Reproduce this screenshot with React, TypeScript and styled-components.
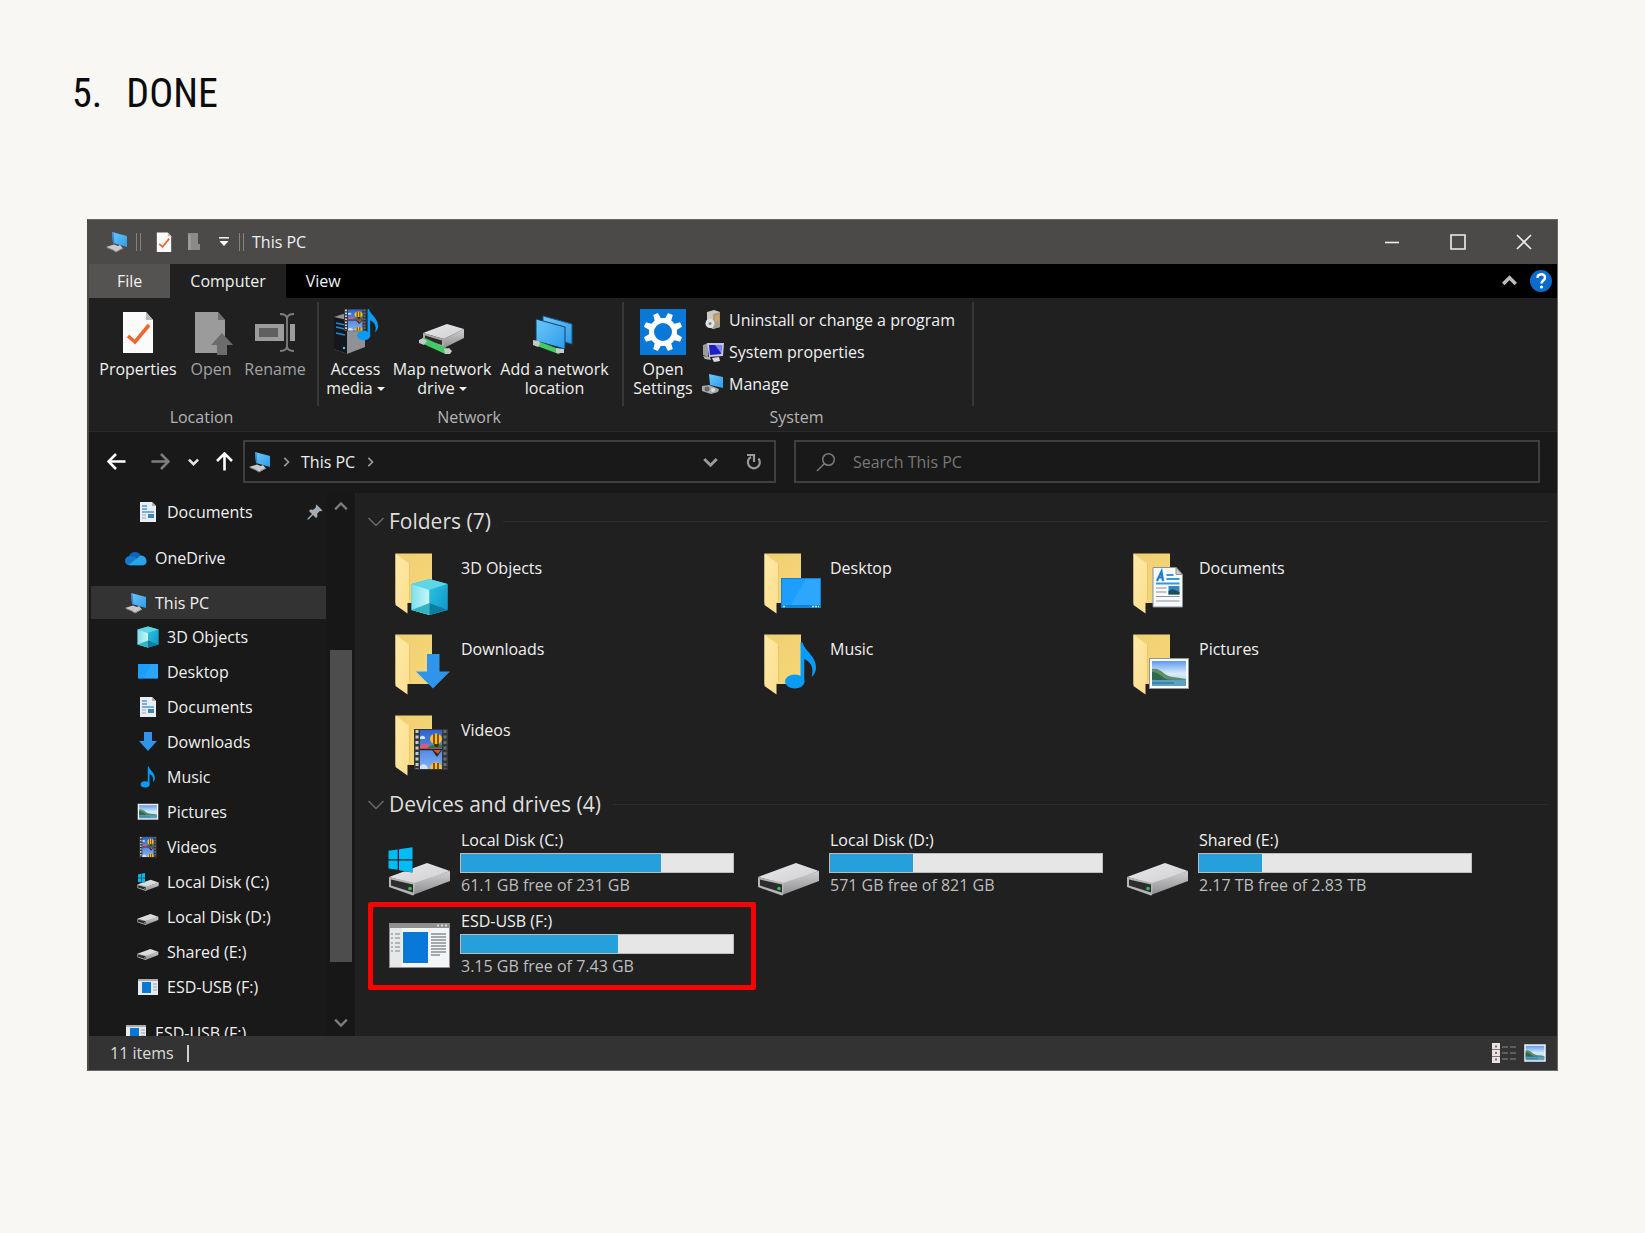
import React from "react";
import styled, { createGlobalStyle, css } from "styled-components";

const c = {
  page: "#f8f7f3",
  title: "#4b4a48",
  ribbon: "#202020",
  chrome: "#191919",
  line: "#3f3f3f",
  text: "#f0f0f0",
  muted: "#b4b4b4",
  fill: "#26a0da",
};

const GlobalStyle = createGlobalStyle`
  *, *::before, *::after { box-sizing: border-box; }
  body {
    margin: 0;
    background: ${c.page};
    font-family: "Open Sans", "Noto Sans", sans-serif;
    font-size: 16px;
    line-height: 22px;
  }
  svg { display: block; flex: none; }
  button { font: inherit; color: inherit; background: none; border: 0; padding: 0; margin: 0; cursor: pointer; }
  a { color: inherit; text-decoration: none; }
  ul { list-style: none; margin: 0; padding: 0; }
`;

/* ---------- page ---------- */

const Slide = styled.main`
  padding: 68px 87px 96px 72px;
`;

const Heading = styled.h1`
  display: flex;
  gap: 24px;
  margin: 0 0 99px;
  font-family: "Roboto Condensed", "Open Sans Condensed", "Noto Sans Condensed", Roboto, sans-serif;
  font-size: 40px;
  line-height: 52px;
  font-weight: 400;
  color: #0c0c0c;
`;

const Window = styled.section`
  margin-left: 15px;
  border: 1px solid #6a6967;
  border-left: 2px solid #4a4947;
  background: ${c.ribbon};
  color: ${c.text};
`;

/* ---------- title bar ---------- */

const TitleBar = styled.header`
  display: flex;
  align-items: center;
  height: 44px;
  padding-left: 17px;
  background: ${c.title};
`;

const QuickAccess = styled.div`
  display: flex;
  align-items: center;
  flex: 1;
`;

const QuickButton = styled.button`
  display: grid;
  place-items: center;
  width: 30px;
  height: 28px;
`;

const Grip = styled.span<{ $lead?: number }>`
  width: 5px;
  height: 18px;
  margin: 0 8px 0 ${(p) => p.$lead ?? 0}px;
  border: 1px solid #83827f;
  border-width: 0 1px;
`;

const WindowTitle = styled.h2`
  margin: 0;
  font-size: 16px;
  font-weight: 400;
`;

const CaptionButton = styled.button`
  display: grid;
  place-items: center;
  width: 66px;
  height: 44px;
`;

/* ---------- ribbon ---------- */

const TabBar = styled.div`
  display: flex;
  align-items: center;
  height: 34px;
  padding-right: 4px;
  background: #000;
`;

const Tab = styled.button<{ $kind?: "file" | "active" }>`
  height: 34px;
  padding: 0 20px;
  ${(p) => p.$kind === "file" && css`background: #545351; padding: 0 28px;`}
  ${(p) => p.$kind === "active" && css`background: ${c.ribbon};`}
`;

const TabTools = styled.div`
  display: flex;
  align-items: center;
  gap: 12px;
  margin-left: auto;
`;

const Ribbon = styled.div`
  display: flex;
  height: 134px;
  padding-top: 4px;
  border-bottom: 1px solid #282828;
`;

const Group = styled.section<{ $width: number }>`
  display: flex;
  flex-direction: column;
  width: ${(p) => p.$width}px;
`;

const GroupTools = styled.div`
  display: flex;
  height: 104px;
  padding: 7px 0 0 3px;
  border-right: 2px solid #383838;
`;

const GroupName = styled.h3`
  margin: 0;
  padding-right: 5px;
  font-size: 16px;
  font-weight: 400;
  text-align: center;
  color: ${c.muted};
`;

const RibbonButton = styled.button<{ $width: number }>`
  display: flex;
  flex-direction: column;
  align-items: center;
  width: ${(p) => p.$width}px;
  line-height: 19px;
  white-space: nowrap;
  &:disabled { color: #a3a3a3; }
  svg { margin-bottom: 5px; }
`;

const RibbonLabel = styled.span`
  display: block;
  white-space: pre-line;
`;

const Caret = styled.span`
  display: inline-block;
  margin-left: 4px;
  vertical-align: 3px;
  border: 4px solid transparent;
  border-top-color: currentColor;
  border-bottom-width: 0;
`;

const CommandList = styled.div`
  display: flex;
  flex-direction: column;
  gap: 10px;
  padding-left: 3px;
`;

const Command = styled.button`
  display: flex;
  align-items: center;
  gap: 5px;
  white-space: nowrap;
`;

/* ---------- navigation row ---------- */

const NavBar = styled.nav`
  display: flex;
  align-items: center;
  height: 61px;
  padding: 0 17px 2px 18px;
  background: ${c.chrome};
`;

const History = styled.div`
  display: flex;
  align-items: center;
  width: 136px;
`;

const HistoryButton = styled.button<{ $gap: number }>`
  margin-right: ${(p) => p.$gap}px;
`;

const Fields = styled.div`
  display: grid;
  grid-template-columns: 5fr 7fr;
  gap: 18px;
  flex: 1;
`;

const Field = styled.div`
  display: flex;
  align-items: center;
  height: 43px;
  border: 2px solid ${c.line};
`;

const Address = styled(Field)`
  padding: 0 11px 0 4px;
`;

const Crumbs = styled.div`
  display: flex;
  align-items: center;
  flex: 1;
  gap: 10px;
`;

const AddressTools = styled.div`
  display: flex;
  align-items: center;
  gap: 27px;
`;

const Search = styled(Field)`
  padding: 0 20px;
  gap: 17px;
`;

const SearchInput = styled.input`
  flex: 1;
  min-width: 0;
  padding: 0;
  border: 0;
  outline: 0;
  background: none;
  font: inherit;
  color: ${c.text};
  &::placeholder { color: #777; opacity: 1; }
`;

/* ---------- body ---------- */

const Body = styled.div`
  display: grid;
  grid-template-columns: 266px minmax(0, 1fr);
`;

const Sidebar = styled.aside`
  display: grid;
  grid-template-columns: minmax(0, 1fr) 29px;
  contain: size;
  overflow: hidden;
  background: ${c.chrome};
`;

const Tree = styled.div`
  display: flex;
  flex-direction: column;
  gap: 12px;
  min-height: 0;
  padding: 1px 0 0 2px;
  overflow: hidden;
  & > * { flex-shrink: 0; }
`;

const Node = styled.a<{ $child?: boolean; $selected?: boolean }>`
  display: flex;
  align-items: center;
  gap: 8px;
  height: ${(p) => (p.$child ? 35 : 33)}px;
  padding: 0 3px 0 ${(p) => (p.$child ? 46 : 34)}px;
  background: ${(p) => (p.$selected ? "#333" : "none")};
  white-space: nowrap;
`;

const NodeName = styled.span`
  flex: 1;
`;

const Scroll = styled.div`
  display: grid;
  grid-template-rows: 28px 129fr 312fr 46fr 28px;
  justify-items: center;
  background: #171717;
`;

const ScrollButton = styled.button`
  display: grid;
  place-items: center;
  width: 22px;
  &:last-child { grid-row: 5; }
`;

const Thumb = styled.div`
  grid-row: 3;
  width: 22px;
  background: #4d4d4d;
`;

const Content = styled.div`
  padding: 10px 9px 48px 11px;
  border-left: 1px solid #242424;
`;

const SectionHead = styled.h3`
  display: flex;
  align-items: center;
  gap: 4px;
  height: 36px;
  margin: 0 0 4px;
  font-size: 21px;
  line-height: 28px;
  font-weight: 400;
  color: #dedede;
  &::after {
    content: "";
    flex: 1;
    height: 1px;
    margin-left: 8px;
    background: #2c2c2c;
  }
`;

const Tiles = styled.div`
  display: grid;
  grid-template-columns: repeat(auto-fill, 369px);
  padding-left: 13px;
`;

const Tile = styled.a<{ $marked?: boolean }>`
  position: relative;
  display: flex;
  gap: 8px;
  height: 81px;
  padding: 8px 15px 0 8px;
  ${(p) =>
    p.$marked &&
    css`
      &::after {
        content: "";
        position: absolute;
        inset: -5px -7px -2px -12px;
        border: 5px solid #f60404;
        border-radius: 2px;
      }
    `}
`;

const FolderName = styled.span`
  padding: 6px 0 0 1px;
`;

const DriveInfo = styled.span`
  display: flex;
  flex-direction: column;
  flex: 1;
  margin-top: -5px;
`;

const DriveText = styled.span<{ $dim?: boolean }>`
  padding-left: 1px;
  color: ${(p) => (p.$dim ? "#bdbdbd" : c.text)};
`;

const Usage = styled.progress`
  appearance: none;
  display: block;
  width: 100%;
  height: 20px;
  margin: 2px 0 1px;
  border: 1px solid #bcbcbc;
  background: #e6e6e6;
  &::-webkit-progress-bar { background: #e6e6e6; }
  &::-webkit-progress-value { background: ${c.fill}; }
`;

/* ---------- status bar ---------- */

const StatusBar = styled.footer`
  display: flex;
  align-items: center;
  height: 34px;
  padding: 0 11px 0 21px;
  background: #333;
  color: #dcdcdc;
`;

const Divider = styled.span`
  width: 2px;
  height: 17px;
  margin-left: 13px;
  background: #cfcfcf;
`;

const Views = styled.div`
  display: flex;
  align-items: center;
  gap: 8px;
  margin-left: auto;
`;

/* ---------- drawings ---------- */

const HiddenSvg = styled.svg`
  position: absolute;
`;

const Defs = () => (
  <HiddenSvg width="0" height="0" aria-hidden="true">
    <defs>
      <linearGradient id="back" x1="0" y1="0" x2="1" y2="1">
        <stop offset="0" stopColor="#f0cf72" /><stop offset="1" stopColor="#f6d878" />
      </linearGradient>
      <linearGradient id="flap" x1="0" y1="0" x2="1" y2="1">
        <stop offset="0" stopColor="#ffe9a8" /><stop offset="1" stopColor="#fbdf8e" />
      </linearGradient>
      <linearGradient id="screen" x1="0" y1="0" x2="1" y2="1">
        <stop offset="0" stopColor="#6cc7fb" /><stop offset="1" stopColor="#2d9ceb" />
      </linearGradient>
      <linearGradient id="lid" x1="0" y1="0" x2="1" y2="1">
        <stop offset="0" stopColor="#e9e9ea" /><stop offset="1" stopColor="#cfcfd2" />
      </linearGradient>
      <linearGradient id="side" x1="0" y1="0" x2="0" y2="1">
        <stop offset="0" stopColor="#d0d0d2" /><stop offset="1" stopColor="#8d8d90" />
      </linearGradient>
      <linearGradient id="sky" x1="0" y1="0" x2="0" y2="1">
        <stop offset="0" stopColor="#5f9bee" /><stop offset="0.5" stopColor="#d8ebfb" /><stop offset="1" stopColor="#a9d3ea" />
      </linearGradient>
      <linearGradient id="film" x1="0" y1="0" x2="0" y2="1">
        <stop offset="0" stopColor="#2d63cf" /><stop offset="1" stopColor="#7fb0f3" />
      </linearGradient>
      <linearGradient id="cubeL" x1="0" y1="0" x2="1" y2="0">
        <stop offset="0" stopColor="#7de0ea" /><stop offset="1" stopColor="#c9f6f8" />
      </linearGradient>
      <linearGradient id="cubeR" x1="0" y1="0" x2="1" y2="1">
        <stop offset="0" stopColor="#2cc3e2" /><stop offset="1" stopColor="#0c93c6" />
      </linearGradient>
    </defs>
  </HiddenSvg>
);

const PcIcon = () => (
  <svg width="22" height="22" viewBox="0 0 22 22" aria-hidden="true">
    <path d="M6 1l15 4v11L7 12z" fill="url(#screen)" />
    <path d="M6 1l1 11 1.500.4L7.500 1.400z" fill="#3a86c4" />
    <path d="M0 16l8-2.500 4 1.500 2-1 3 3.500-7 3.500-3-2z" fill="#c9c9c9" />
    <path d="M1 16.500l6 2.500 3 2 6-3.500" fill="none" stroke="#8b8b8b" strokeWidth="1" />
  </svg>
);

const CubeArt = () => (
  <>
    <path d="M0 5L18 0l18 5v26l-18 5-18-5z" fill="#1fb4da" />
    <path d="M0 5L18 0l18 5-18 6z" fill="#5fd6e6" />
    <path d="M0 5l18 6v25L0 31z" fill="url(#cubeL)" />
    <path d="M18 11l18-6v26l-18 5z" fill="url(#cubeR)" />
    <path d="M0 31l18-7v12z" fill="#35b3c4" />
    <path d="M18 24l18 7-18 5z" fill="#0b7fa0" />
  </>
);

const NoteArt = () => (
  <>
    <path d="M15.500 0h2.200c1.300 8 13.300 13 13.300 25 0 4-1.500 7-4.500 9.500C30 24 24 18.500 19.300 16.500V38h-3.800z" fill="#0a9bf5" />
    <ellipse cx="9.800" cy="39" rx="9.800" ry="7" fill="#0a9bf5" />
  </>
);

const PhotoArt = () => (
  <>
    <rect width="40" height="31" fill="#8e979d" />
    <rect x="1" y="1" width="38" height="29" fill="#fafafa" />
    <rect x="3" y="3" width="34" height="25" fill="url(#sky)" />
    <path d="M3 11c5-1 8 1 13 5s13 3 21 5v2H3z" fill="#5e8f63" />
    <path d="M3 14c5 0 8 3 12 6s14 1 22 3v1H3z" fill="#2f6a4f" />
    <path d="M3 22h34v6H3z" fill="#5d9fc2" />
    <path d="M3 24h22v2H3z" fill="#2f6f9a" opacity="0.6" />
  </>
);

const FilmArt = () => (
  <>
    <rect width="34" height="41" fill="#33363a" />
    <path d="M3 1v39" stroke="#c6cbd0" strokeWidth="3" strokeDasharray="3 2.500" />
    <path d="M31 1v39" stroke="#6a6e73" strokeWidth="3" strokeDasharray="3 2.500" />
    <rect x="6" y="1" width="22" height="39" fill="url(#film)" />
    <path d="M6 17c3-3 8-2 11 0h11v3H6z" fill="#e05a6a" />
    <path d="M14 18c5-3 9-3 14-2v3H14z" fill="#317a35" />
    <path d="M6 8c3-3 6 0 5 2H6zM6 37c3-3 7-2 8 3H6z" fill="#cfe2fa" />
    <path d="M6 20.500h22" stroke="#1d2733" strokeWidth="1.500" />
    <ellipse cx="22" cy="10" rx="6" ry="5.500" fill="#f6c522" />
    <path d="M20 5v10M24 5v10" stroke="#7d2b12" strokeWidth="1.600" />
    <path d="M20 15h5l-1 3h-3z" fill="#4a2913" />
    <path d="M18 21h10l-5 7z" fill="#2b2224" />
    <path d="M19 21h8l-3 4z" fill="#c9572d" />
    <path d="M16 40c0-9 12-9 12 0z" fill="#f6c522" />
    <path d="M20 34v6M24 34v6" stroke="#7d2b12" strokeWidth="1.600" />
  </>
);

const PageArt = () => (
  <>
    <path d="M.5.5h23l6.500 7v32.500H.5z" fill="#f7f9fb" stroke="#8a9197" />
    <path d="M23.500.5v7H30z" fill="#c7cdd2" stroke="#8a9197" />
    <path d="M4.500 14L9 4.500l1.500 9.500M6 10.500h4.500" fill="none" stroke="#1b7fd0" strokeWidth="2.200" />
    <path d="M14 8h7M14 12h13M3.500 16.500H27" stroke="#2f9ae0" strokeWidth="1.800" />
    <path d="M3.500 21H14M3.500 25H14M3.500 29.500H27M3.500 34H27" stroke="#8d9499" strokeWidth="1.200" />
    <rect x="16" y="19" width="11" height="8.500" fill="#3b84bf" />
    <path d="M16 24l4-2 7 3v2.500H16z" fill="#1f4d55" />
  </>
);

const overlays: Record<string, React.ReactNode> = {
  cube: <g transform="translate(23.500 28)"><CubeArt /></g>,
  desktop: (
    <g transform="translate(24 27)">
      <rect width="40" height="30" fill="#0f83dc" />
      <rect x="1" y="1" width="38" height="26" fill="#1c9ffc" />
      <path d="M25 1h14v26H10z" fill="#3dafff" opacity="0.5" />
      <path d="M2 28.500h2M31 28.500h7" stroke="#bfe3fb" strokeWidth="1.500" strokeDasharray="2 1" />
    </g>
  ),
  page: <g transform="translate(26.500 16)"><PageArt /></g>,
  down: <path d="M39 22h12.500v17.500H62l-17 17-17-17h11z" fill="#2f94ea" />,
  note: <g transform="translate(28 10.500)"><NoteArt /></g>,
  photo: <g transform="translate(23 26)"><PhotoArt /></g>,
  film: <g transform="translate(26 16)"><FilmArt /></g>,
};

const FolderIcon = ({ kind }: { kind: string }) => (
  <svg width="64" height="64" viewBox="0 0 64 64" aria-hidden="true">
    <path d="M7.500 2.500H44V52H7.500z" fill="url(#back)" />
    <path d="M7.500 2.500l14 10.500v36l-2 2v11.500l-12-8.500z" fill="url(#flap)" />
    <path d="M21.500 13v36" stroke="#e3bd5c" strokeWidth="0.700" />
    {overlays[kind]}
  </svg>
);

const DriveArt = () => (
  <>
    <path d="M39 29l23 8-35 13L1 43z" fill="url(#lid)" />
    <path d="M62 37v10L25 61l1-12z" fill="url(#side)" />
    <path d="M1 43l26 6-1 12-1 .5L1 53z" fill="#b5b5b8" />
    <path d="M3 45.500l22 5v8L3 51.500z" fill="#2c2d2f" />
    <circle cx="22" cy="54.500" r="1.800" fill="#35c04a" />
  </>
);

const DriveIcon = ({ system }: { system?: boolean }) => (
  <svg width="64" height="64" viewBox="0 0 64 64" aria-hidden="true">
    <DriveArt />
    {system && (
      <>
        <path d="M.5 14.500L24.500 12v26.500L.5 35z" fill="#202020" />
        <path d="M.5 16.800l9.200-1.300v9.700H.5zM11 15.300l13.500-2v11.900H11zM.5 26.500h9.200v9.300l-9.200-1.300zM11 26.500h13.500v12L11 36.200z" fill="#04bcf4" />
      </>
    )}
  </svg>
);

const InstallerIcon = () => (
  <svg width="64" height="64" viewBox="0 0 64 64" aria-hidden="true">
    <rect x="1" y="8" width="61" height="45" fill="#8f8f8f" />
    <path d="M2 13h59v39H2z" fill="#f4f5f6" />
    <path d="M2 13h12v39H2z" fill="#e6e8e9" />
    <path d="M49 10.500h2M53 10.500h2M57 10.500h2" stroke="#d8d8d8" strokeWidth="2" />
    <path d="M3 19h2m2 0h5M3 23h2m2 0h5M3 28h2m2 0h5M3 32h2m2 0h5M3 36h2m2 0h5" stroke="#7f8386" strokeWidth="1.200" />
    <rect x="15" y="17" width="25" height="31" fill="#0a78d7" />
    <path d="M43 19h15M43 22h15M43 25h15M43 28h15M43 31h15M43 34h15M43 37h15M43 40h9" stroke="#8b8f92" strokeWidth="1.300" />
  </svg>
);

const SmallIcon = ({ kind }: { kind: string }) => {
  switch (kind) {
    case "pc":
      return <PcIcon />;
    case "cloud":
      return (
        <svg width="22" height="22" viewBox="0 0 24 22" aria-hidden="true">
          <path d="M4 10C5 4 14 2 17 8l-8 5z" fill="#0a64b8" />
          <path d="M5 19a5 5 0 0 1 0-10c3-.6 5 .5 7 2l8 8z" fill="#1379d0" />
          <path d="M4 18.500L16 8.500c4-1 7 1.500 7.500 5.500.3 3-2 5-4 5H6z" fill="#28a5ea" />
        </svg>
      );
    case "cube":
      return <svg width="22" height="22" viewBox="-1 -1 38 38" aria-hidden="true"><CubeArt /></svg>;
    case "desktop":
      return (
        <svg width="22" height="22" viewBox="0 0 22 22" aria-hidden="true">
          <rect x="1" y="3" width="20" height="15" fill="#1c9ffc" />
          <path d="M14 3h7v15H7z" fill="#46b2ff" opacity="0.4" />
          <path d="M1 17.500h20" stroke="#0b73c9" />
        </svg>
      );
    case "page":
      return (
        <svg width="22" height="22" viewBox="0 0 22 22" aria-hidden="true">
          <path d="M3 1h12l4 4v16H3z" fill="#e9eef2" />
          <path d="M15 1v4h4z" fill="#aab3ba" />
          <path d="M5 5h5M5 8h5M5 11h12" stroke="#4b9ad6" strokeWidth="1.500" />
          <path d="M11 13h6v4h-6z" fill="#3f86bb" />
          <path d="M5 14h4M5 17h4" stroke="#9aa4ab" />
        </svg>
      );
    case "down":
      return <svg width="22" height="22" viewBox="0 0 22 22" aria-hidden="true"><path d="M7 1h8v9h5l-9 10-9-10h5z" fill="#2f94ea" /></svg>;
    case "note":
      return <svg width="22" height="22" viewBox="-8 -1 48 48" aria-hidden="true"><NoteArt /></svg>;
    case "photo":
      return <svg width="22" height="22" viewBox="-1 -5 42 42" aria-hidden="true"><PhotoArt /></svg>;
    case "film":
      return <svg width="22" height="22" viewBox="-4 -1 42 43" aria-hidden="true"><FilmArt /></svg>;
    case "system":
      return (
        <svg width="22" height="22" viewBox="0 0 22 22" aria-hidden="true">
          <g transform="translate(0 -1.500) scale(.35)"><DriveArt /></g>
          <path d="M1 3.500L8 2v10l-7-1z" fill="#12b5e8" />
          <path d="M4.500 2.500v9M1 7h7" stroke="#0b5871" strokeWidth="0.800" />
        </svg>
      );
    case "drive":
      return <svg width="22" height="22" viewBox="0 6 64 64" aria-hidden="true"><DriveArt /></svg>;
    default:
      return (
        <svg width="22" height="22" viewBox="0 0 22 22" aria-hidden="true">
          <path d="M1 3h20v16H1z" fill="#e8ebee" />
          <path d="M1 3h20v2H1z" fill="#a9adb0" />
          <rect x="5" y="6" width="9" height="11" fill="#0a78d7" />
          <path d="M16 8h4M16 11h4M16 14h4" stroke="#9a9ea1" />
        </svg>
      );
  }
};

const PropertiesIcon = ({ size = 46 }: { size?: number }) => (
  <svg width={size} height={size} viewBox="0 0 46 46" aria-hidden="true">
    <path d="M8 3h23l7 8v33H8z" fill="#fbfbfb" />
    <path d="M31 3v8h7z" fill="#b9b9b9" />
    <path d="M13 27l7 6 14-17" fill="none" stroke="#f0652b" strokeWidth="3.600" />
  </svg>
);

const OpenIcon = () => (
  <svg width="46" height="46" viewBox="0 0 46 46" aria-hidden="true">
    <path d="M7 3h23l7 8v33H7z" fill="#9b9b9b" />
    <path d="M30 3v8h7z" fill="#6e6e6e" />
    <path d="M34 24l11 12h-6v10H29V36h-6z" fill="#6c6c6c" />
  </svg>
);

const RenameIcon = () => (
  <svg width="46" height="46" viewBox="0 0 46 46" aria-hidden="true">
    <path d="M3 15h40v17H3z" fill="#9c9c9c" />
    <path d="M7 19h19v9H7z" fill="#606060" />
    <path d="M32 15h6v17h-6z" fill="#202020" />
    <path d="M28 5c5 0 7 2 7 5v27c0 3-2 5-7 5M42 5c-5 0-7 2-7 5v27c0 3 2 5 7 5" fill="none" stroke="#7d7d7d" strokeWidth="1.800" />
  </svg>
);

const MediaIcon = () => (
  <svg width="46" height="46" viewBox="0 0 46 46" aria-hidden="true">
    <path d="M1 8l9-3 22 4v29l-18 7L1 40z" fill="#8f9194" />
    <path d="M1 8l13 3v34L1 40z" fill="#14181d" />
    <path d="M3 14l9 2M3 18l9 2M3 24l9 2" stroke="#1d8bd0" strokeWidth="1.400" />
    <circle cx="11" cy="39" r="1.200" fill="#36d0d8" />
    <g transform="translate(11 0) scale(.66 .54)"><FilmArt /></g>
    <g transform="translate(24 0) scale(.68)"><NoteArt /></g>
  </svg>
);

const MapDriveIcon = () => (
  <svg width="46" height="46" viewBox="0 0 46 46" aria-hidden="true">
    <path d="M4 24l24-9 17 5-20 10z" fill="url(#lid)" />
    <path d="M45 20v9l-20 10v-9z" fill="url(#side)" />
    <path d="M4 24l21 6v9L4 33z" fill="#aaaaad" />
    <path d="M6 26.500l17 5v4.500L6 31z" fill="#2b2c2e" />
    <path d="M3 31l24 11" stroke="#47c865" strokeWidth="6" />
    <path d="M0 31l4-2 4 3-3 4-5-2zM25 40l5-1 3 3-2 3-5 0z" fill="#c3c9c4" />
  </svg>
);

const AddLocationIcon = () => (
  <svg width="46" height="46" viewBox="0 0 46 46" aria-hidden="true">
    <path d="M11 7l29 8v20l-29-8z" fill="url(#screen)" stroke="#155b86" />
    <path d="M4 10l29 8v22L4 32z" fill="url(#screen)" stroke="#123f5d" />
    <path d="M4 34l24 9" stroke="#47c865" strokeWidth="5" />
    <path d="M1 31l6 1 1 3-2 3-5-2zM24 39l8 1v4l-8 0z" fill="#c3c9c4" />
  </svg>
);

const SettingsIcon = () => (
  <svg width="46" height="46" viewBox="0 0 46 46" aria-hidden="true">
    <rect width="46" height="46" fill="#0a78d7" />
    <g fill="#fff">
      {[22.5, 67.5, 112.5, 157.5, 202.5, 247.5, 292.5, 337.5].map((a) => (
        <path key={a} d="M19.500 11L20.500 3.500h5L26.500 11z" transform={`rotate(${a} 23 23)`} />
      ))}
    </g>
    <circle cx="23" cy="23" r="11.500" fill="none" stroke="#fff" strokeWidth="5" />
  </svg>
);

const UninstallIcon = () => (
  <svg width="22" height="22" viewBox="0 0 22 22" aria-hidden="true">
    <path d="M5 3l7-2 6 2v15l-7 2-6-3z" fill="#cfcac0" />
    <path d="M11 5l7-2v15l-7 2z" fill="#a59c8c" />
    <path d="M13 7l4-1v6l-4 1z" fill="#d9a457" />
    <circle cx="8" cy="14.500" r="4.500" fill="#dfe3e6" />
    <circle cx="8" cy="14.500" r="1.500" fill="#7c8186" />
  </svg>
);

const SystemIcon = () => (
  <svg width="22" height="22" viewBox="0 0 22 22" aria-hidden="true">
    <path d="M1 4l5-2v14l-5-2z" fill="#9a9aa0" />
    <path d="M5 2h17l-1 13-14 1z" fill="#c5c5d6" />
    <path d="M7 4h13l-1 9-11 1z" fill="#1c1fc4" />
    <path d="M13 4h7l-1 8z" fill="#7f84ee" />
    <path d="M10 17l7-1 1 4-6 1z" fill="#dcdcdc" />
    <path d="M1 15l7 1 1 3-6-1z" fill="#b3b3b3" />
  </svg>
);

const ManageIcon = () => (
  <svg width="22" height="22" viewBox="0 0 22 22" aria-hidden="true">
    <path d="M7 1l14 3v11L8 12z" fill="url(#screen)" />
    <path d="M0 13l7-1 10 4-1 3-7 2-9-3z" fill="#a9a9ab" />
    <circle cx="5" cy="16" r="2.500" fill="#66686b" />
    <circle cx="11" cy="17" r="2" fill="#dedede" />
  </svg>
);

const Chevron = ({ dir, size = 10, width = 2, color = "#9a9a9a" }: { dir: "up" | "down" | "right"; size?: number; width?: number; color?: string }) => {
  const d = { up: "M1 8l5-5 5 5", down: "M1 4l5 5 5-5", right: "M4 1l5 5-5 5" }[dir];
  return (
    <svg width={size} height={size} viewBox="0 0 12 12" aria-hidden="true">
      <path d={d} fill="none" stroke={color} strokeWidth={width} />
    </svg>
  );
};

const Arrow = ({ turn = 0, color = "#fff" }: { turn?: number; color?: string }) => (
  <svg width="19" height="19" viewBox="0 0 19 19" aria-hidden="true">
    <path d="M18.500 9.500H2M9 2L1.500 9.500 9 17" fill="none" stroke={color} strokeWidth="2.600" transform={`rotate(${turn} 9.500 9.500)`} />
  </svg>
);

/* ---------- data ---------- */

const folders = [
  ["3D Objects", "cube"],
  ["Desktop", "desktop"],
  ["Documents", "page"],
  ["Downloads", "down"],
  ["Music", "note"],
  ["Pictures", "photo"],
  ["Videos", "film"],
];

const drives = [
  { name: "Local Disk (C:)", small: "system", free: "61.1 GB free of 231 GB", used: 73.5 },
  { name: "Local Disk (D:)", small: "drive", free: "571 GB free of 821 GB", used: 30.4 },
  { name: "Shared (E:)", small: "drive", free: "2.17 TB free of 2.83 TB", used: 23.3 },
  { name: "ESD-USB (F:)", small: "installer", free: "3.15 GB free of 7.43 GB", used: 57.6 },
];

/* ---------- sections ---------- */

const Title = () => (
  <TitleBar>
    <QuickAccess>
      <PcIcon />
      <Grip $lead={8} />
      <QuickButton aria-label="Properties"><PropertiesIcon size={22} /></QuickButton>
      <QuickButton aria-label="New folder">
        <svg width="14" height="18" viewBox="0 0 14 18" aria-hidden="true">
          <path d="M1 0h10v11h2v6H1z" fill="#8b8a88" />
          <path d="M1 0l3 3v14H1z" fill="#9c9b99" />
        </svg>
      </QuickButton>
      <QuickButton aria-label="Customize Quick Access Toolbar">
        <svg width="12" height="10" viewBox="0 0 12 10" aria-hidden="true">
          <path d="M1 .8h10" stroke="#fff" strokeWidth="1.400" />
          <path d="M1.500 4h9L6 9z" fill="#fff" />
        </svg>
      </QuickButton>
      <Grip />
      <WindowTitle>This PC</WindowTitle>
    </QuickAccess>
    <CaptionButton aria-label="Minimize">
      <svg width="16" height="16" viewBox="0 0 16 16"><path d="M1 8.500h14" stroke="#eee" strokeWidth="1.600" /></svg>
    </CaptionButton>
    <CaptionButton aria-label="Maximize">
      <svg width="16" height="16" viewBox="0 0 16 16"><path d="M1 1h14v14H1z" fill="none" stroke="#eee" strokeWidth="1.600" /></svg>
    </CaptionButton>
    <CaptionButton aria-label="Close">
      <svg width="16" height="16" viewBox="0 0 16 16"><path d="M1 1l14 14M15 1L1 15" stroke="#eee" strokeWidth="1.600" /></svg>
    </CaptionButton>
  </TitleBar>
);

const RibbonTabs = () => (
  <TabBar>
    <Tab $kind="file">File</Tab>
    <Tab $kind="active">Computer</Tab>
    <Tab>View</Tab>
    <TabTools>
      <button aria-label="Collapse the ribbon"><Chevron dir="up" size={15} width={2.8} color="#bdbdbd" /></button>
      <button aria-label="Help">
        <svg width="24" height="24" viewBox="0 0 24 24">
          <circle cx="12" cy="12" r="11" fill="#0b6cce" />
          <path d="M8.500 9c0-5 7.500-5 7.500-.5 0 3-3.500 3-3.500 6" fill="none" stroke="#fff" strokeWidth="2.400" />
          <circle cx="12.500" cy="18" r="1.600" fill="#fff" />
        </svg>
      </button>
    </TabTools>
  </TabBar>
);

const RibbonGroups = () => (
  <Ribbon>
    <Group $width={230}>
      <GroupTools>
        <RibbonButton $width={92}><PropertiesIcon /><RibbonLabel>Properties</RibbonLabel></RibbonButton>
        <RibbonButton $width={54} disabled><OpenIcon /><RibbonLabel>Open</RibbonLabel></RibbonButton>
        <RibbonButton $width={74} disabled><RenameIcon /><RibbonLabel>Rename</RibbonLabel></RibbonButton>
      </GroupTools>
      <GroupName>Location</GroupName>
    </Group>
    <Group $width={305}>
      <GroupTools>
        <RibbonButton $width={67}><MediaIcon /><RibbonLabel>{"Access\nmedia"}<Caret /></RibbonLabel></RibbonButton>
        <RibbonButton $width={106}><MapDriveIcon /><RibbonLabel>{"Map network\ndrive"}<Caret /></RibbonLabel></RibbonButton>
        <RibbonButton $width={119}><AddLocationIcon /><RibbonLabel>{"Add a network\nlocation"}</RibbonLabel></RibbonButton>
      </GroupTools>
      <GroupName>Network</GroupName>
    </Group>
    <Group $width={350}>
      <GroupTools>
        <RibbonButton $width={72}><SettingsIcon /><RibbonLabel>{"Open\nSettings"}</RibbonLabel></RibbonButton>
        <CommandList>
          <Command><UninstallIcon />Uninstall or change a program</Command>
          <Command><SystemIcon />System properties</Command>
          <Command><ManageIcon />Manage</Command>
        </CommandList>
      </GroupTools>
      <GroupName>System</GroupName>
    </Group>
  </Ribbon>
);

const Navigation = () => (
  <NavBar aria-label="Location">
    <History>
      <HistoryButton $gap={25} aria-label="Back"><Arrow /></HistoryButton>
      <HistoryButton $gap={18} aria-label="Forward"><Arrow turn={180} color="#7d7d7d" /></HistoryButton>
      <HistoryButton $gap={16} aria-label="Recent locations"><Chevron dir="down" size={11} width={2.8} color="#e6e6e6" /></HistoryButton>
      <HistoryButton $gap={0} aria-label="Up"><Arrow turn={90} /></HistoryButton>
    </History>
    <Fields>
      <Address>
        <Crumbs>
          <PcIcon />
          <Chevron dir="right" />
          <button>This PC</button>
          <Chevron dir="right" />
        </Crumbs>
        <AddressTools>
          <button aria-label="Previous locations"><Chevron dir="down" size={15} width={2.4} /></button>
          <button aria-label="Refresh">
            <svg width="18" height="18" viewBox="0 0 18 18">
              <path d="M13.500 5.500A6 6 0 1 1 6 4" fill="none" stroke="#9a9a9a" strokeWidth="2.200" />
              <path d="M2 2h7v7" fill="none" stroke="#9a9a9a" strokeWidth="2.200" />
            </svg>
          </button>
        </AddressTools>
      </Address>
      <Search as="label">
        <svg width="20" height="20" viewBox="0 0 20 20" aria-hidden="true">
          <circle cx="12.500" cy="7.500" r="5.800" fill="none" stroke="#7a7a7a" strokeWidth="1.500" />
          <path d="M8.500 11.500L1 19" stroke="#7a7a7a" strokeWidth="1.500" />
        </svg>
        <SearchInput type="text" placeholder="Search This PC" aria-label="Search This PC" />
      </Search>
    </Fields>
  </NavBar>
);

const FolderTree = () => (
  <Sidebar>
    <Tree>
      <Node href="#documents" $child>
        <SmallIcon kind="page" />
        <NodeName>Documents</NodeName>
        <svg width="16" height="16" viewBox="0 0 16 16" aria-hidden="true">
          <path d="M9.500.5l6 6-1.500.8-1.200-.3-2.600 2.700.2 3-1.400 1.300-3-3L1.500 15.500.5 15.500v-1L5 10 2 7l1.300-1.400 3 .2L9 3.200 8.700 2z" fill="#a4adb5" />
        </svg>
      </Node>
      <Node href="#onedrive"><SmallIcon kind="cloud" /><NodeName>OneDrive</NodeName></Node>
      <div>
        <Node href="#pc" $selected><SmallIcon kind="pc" /><NodeName>This PC</NodeName></Node>
        <ul>
          {folders.map(([name, kind]) => (
            <li key={name}><Node href="#folder" $child><SmallIcon kind={kind} />{name}</Node></li>
          ))}
          {drives.map((d) => (
            <li key={d.name}><Node href="#drive" $child><SmallIcon kind={d.small} />{d.name}</Node></li>
          ))}
        </ul>
      </div>
      <Node href="#usb"><SmallIcon kind="installer" /><NodeName>ESD-USB (F:)</NodeName></Node>
    </Tree>
    <Scroll>
      <ScrollButton aria-label="Scroll up"><Chevron dir="up" size={14} color="#7c7c7c" /></ScrollButton>
      <Thumb />
      <ScrollButton aria-label="Scroll down"><Chevron dir="down" size={14} color="#7c7c7c" /></ScrollButton>
    </Scroll>
  </Sidebar>
);

const Files = () => (
  <Content>
    <SectionHead><Chevron dir="down" size={18} width={1} color="#6a6a6a" />Folders (7)</SectionHead>
    <Tiles>
      {folders.map(([name, kind]) => (
        <Tile key={name} href="#folder"><FolderIcon kind={kind} /><FolderName>{name}</FolderName></Tile>
      ))}
    </Tiles>
    <SectionHead><Chevron dir="down" size={18} width={1} color="#6a6a6a" />Devices and drives (4)</SectionHead>
    <Tiles>
      {drives.map((d) => (
        <Tile key={d.name} href="#drive" $marked={d.small === "installer"}>
          {d.small === "installer" ? <InstallerIcon /> : <DriveIcon system={d.small === "system"} />}
          <DriveInfo>
            <DriveText>{d.name}</DriveText>
            <Usage max={100} value={d.used} aria-label={`${d.name} used space`} />
            <DriveText $dim>{d.free}</DriveText>
          </DriveInfo>
        </Tile>
      ))}
    </Tiles>
  </Content>
);

export default function App() {
  return (
    <>
      <GlobalStyle />
      <Defs />
      <Slide>
        <Heading><span>5.</span><span>DONE</span></Heading>
        <Window>
          <Title />
          <RibbonTabs />
          <RibbonGroups />
          <Navigation />
          <Body>
            <FolderTree />
            <Files />
          </Body>
          <StatusBar>
            11 items
            <Divider />
            <Views>
              <button aria-label="Details view">
                <svg width="24" height="20" viewBox="0 0 24 20">
                  <path d="M0 0h8v20H0z" fill="#e4e4e4" />
                  <path d="M0 6.500h8M0 13.500h8" stroke="#777" />
                  <path d="M3 3.500h2M3 10h2M3 16.500h2" stroke="#b05a5a" strokeWidth="2" />
                  <path d="M10 4h6m2 0h6M10 10h6m2 0h6M10 16h6m2 0h6" stroke="#8a8a8a" strokeWidth="1.200" />
                </svg>
              </button>
              <button aria-label="Large thumbnails view">
                <svg width="22" height="18" viewBox="0 0 40 31" preserveAspectRatio="none"><PhotoArt /></svg>
              </button>
            </Views>
          </StatusBar>
        </Window>
      </Slide>
    </>
  );
}
